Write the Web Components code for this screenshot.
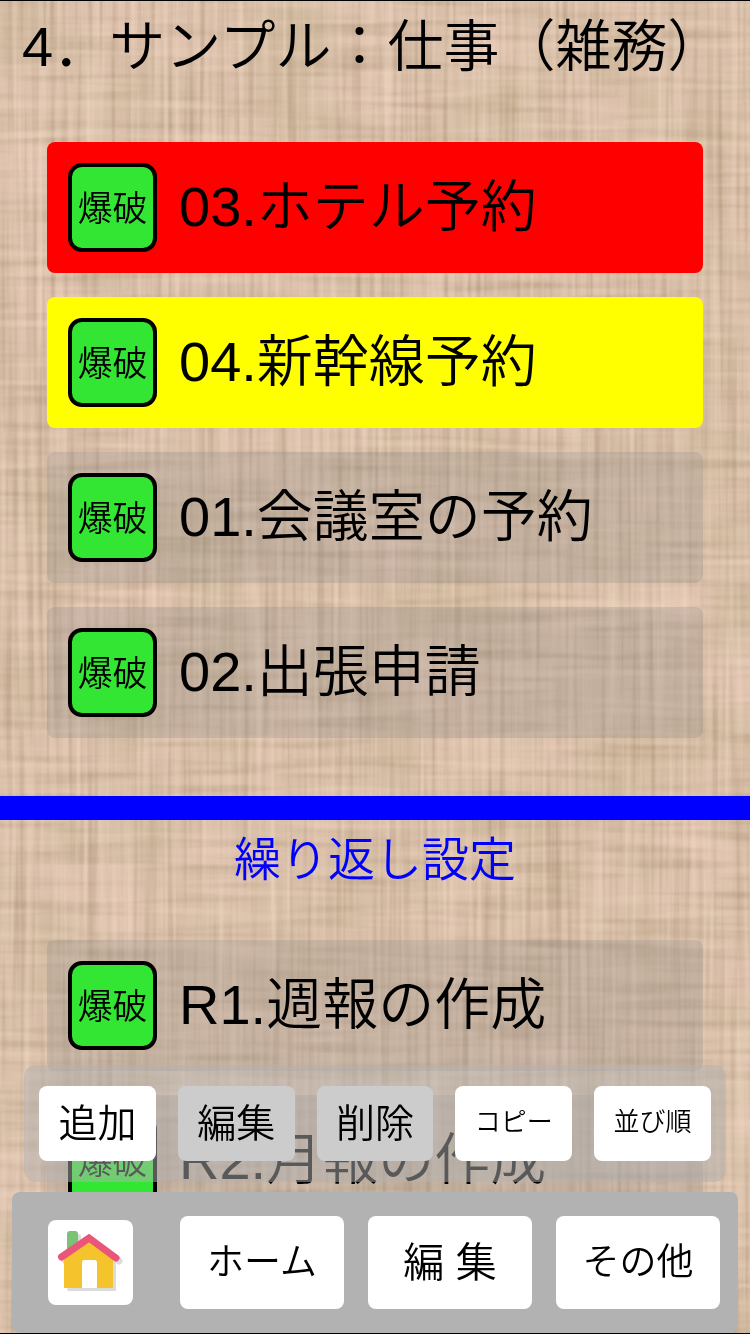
<!DOCTYPE html>
<html lang="ja">
<head>
    <meta charset="UTF-8">
    <meta name="viewport" content="width=device-width, initial-scale=1.0">
    <title>サンプル：仕事（雑務）</title>
    <style>
        body {
            margin: 0;
            color: #000;
            font-family: "Liberation Sans", "Noto Sans CJK JP", sans-serif;
            font-weight: 350;
        }
    </style>
</head>
<body>
    <template id="linen-backdrop">
        <style>
            :host {
                position: fixed;
                inset: 0;
                z-index: -1;
                background: #dac0aa;
            }
            svg {
                display: block;
                width: 100%;
                height: 100%;
            }
        </style>
        <svg aria-hidden="true">
            <filter id="weave" x="0" y="0" width="100%" height="100%" color-interpolation-filters="sRGB">
                <!-- large pink and olive patches -->
                <feTurbulence type="fractalNoise" baseFrequency="0.012 0.014" numOctaves="2" seed="4" result="n0"/>
                <feColorMatrix in="n0" values="0 0 0 0 .76  0 0 0 0 .69  0 0 0 0 .56  1.4 0 0 0 -.6" result="olive"/>
                <feColorMatrix in="n0" values="0 0 0 0 .92  0 0 0 0 .79  0 0 0 0 .73  0 1.4 0 0 -.6" result="pink"/>
                <!-- vertical threads -->
                <feTurbulence type="fractalNoise" baseFrequency="0.16 0.004" numOctaves="2" seed="9" result="n1"/>
                <feColorMatrix in="n1" values="0 0 0 0 .6  0 0 0 0 .49  0 0 0 0 .38  .9 0 0 0 -.4" result="vDark"/>
                <feColorMatrix in="n1" values="0 0 0 0 .97  0 0 0 0 .88  0 0 0 0 .8  0 1 0 0 -.42" result="vLight"/>
                <!-- horizontal threads -->
                <feTurbulence type="fractalNoise" baseFrequency="0.007 0.1" numOctaves="2" seed="21" result="n2"/>
                <feColorMatrix in="n2" values="0 0 0 0 .6  0 0 0 0 .5  0 0 0 0 .38  .8 0 0 0 -.38" result="hDark"/>
                <feColorMatrix in="n2" values="0 0 0 0 .97  0 0 0 0 .87  0 0 0 0 .78  0 .8 0 0 -.38" result="hLight"/>
                <feMerge>
                    <feMergeNode in="olive"/>
                    <feMergeNode in="pink"/>
                    <feMergeNode in="hDark"/>
                    <feMergeNode in="vDark"/>
                    <feMergeNode in="hLight"/>
                    <feMergeNode in="vLight"/>
                </feMerge>
            </filter>
            <rect width="100%" height="100%" filter="url(#weave)"/>
        </svg>
    </template>

    <template id="task-page">
        <style>
            :host {
                display: block;
                box-sizing: border-box;
                min-height: 100vh;
                border: solid #000;
                border-width: 1px 0;
            }
            h1 {
                margin: 0;
                padding: 4px 22px 53px;
                font-size: 56px;
                font-weight: inherit;
                line-height: 84px;
                white-space: nowrap;
            }
            footer {
                position: fixed;
                left: 0;
                right: 0;
                bottom: 1px;
                display: flex;
                flex-direction: column;
                gap: 10px;
            }
        </style>
        <h1><slot name="title"></slot></h1>
        <main><slot></slot></main>
        <footer><slot name="bars"></slot></footer>
    </template>

    <template id="task-list">
        <style>
            :host {
                display: flex;
                flex-direction: column;
                gap: 24px;
                padding: 0 47px;
            }
        </style>
        <slot></slot>
    </template>

    <template id="task-item">
        <style>
            :host {
                display: flex;
                align-items: center;
                gap: 22px;
                box-sizing: border-box;
                height: 131px;
                padding: 0 21px;
                border-radius: 8px;
                background: var(--item-bg, rgba(128, 128, 128, .24));
            }
            button {
                box-sizing: border-box;
                flex: none;
                width: 89px;
                height: 89px;
                padding: 0 0 4px;
                border: 4px solid #000;
                border-radius: 14px;
                background: #33e633;
                color: #000;
                font: inherit;
                font-size: 35px;
                white-space: nowrap;
            }
            span {
                padding-bottom: 2px;
                font-size: 56px;
                line-height: 84px;
                white-space: nowrap;
            }
        </style>
        <button type="button">爆破</button>
        <span><slot></slot></span>
    </template>

    <template id="section-divider">
        <style>
            :host {
                display: block;
                margin-top: 58px;
                padding-bottom: 40px;
                border-top: 24px solid #00f;
            }
            h2 {
                margin: 0;
                color: #00f;
                font-size: 47px;
                font-weight: inherit;
                line-height: 80px;
                text-align: center;
            }
        </style>
        <h2><slot></slot></h2>
    </template>

    <template id="edit-bar">
        <style>
            :host {
                display: grid;
                grid-template-columns: repeat(5, 1fr);
                gap: 22px;
                margin: 0 24px;
                padding: 21px 15px;
                border-radius: 12px;
                background: rgba(178, 178, 178, .5);
            }
        </style>
        <slot></slot>
    </template>

    <template id="nav-bar">
        <style>
            :host {
                display: grid;
                grid-template-columns: 108px repeat(3, 1fr);
                align-items: center;
                gap: 24px;
                margin: 0 12px;
                padding: 24px 18px 24px 36px;
                border-radius: 8px;
                background: #b2b2b2;
            }
        </style>
        <slot></slot>
    </template>

    <template id="bar-button">
        <style>
            :host {
                display: block;
                height: var(--button-height, 75px);
            }
            button {
                width: 100%;
                height: 100%;
                padding: 0 0 8px;
                border: 0;
                border-radius: 8px;
                background: #fff;
                color: #000;
                font: inherit;
                font-size: var(--button-size, 39px);
                white-space: nowrap;
            }
            button:disabled {
                background: #ccc;
            }
        </style>
        <button type="button"><slot></slot></button>
    </template>

    <template id="house-button">
        <style>
            :host {
                display: block;
            }
            button {
                display: block;
                width: 85px;
                height: 85px;
                padding: 0;
                border: 0;
                border-radius: 8px;
                background: #fff;
            }
            svg {
                display: block;
            }
        </style>
        <button type="button" aria-label="トップ">
            <svg width="85" height="85" viewBox="0 0 85 85" aria-hidden="true">
                <g fill="#dcdcdc" stroke="#dcdcdc" transform="translate(3 3)">
                    <path d="M16.500 68V38L41 19l24 19v30z" stroke="none"/>
                    <path d="M13.500 37 41 18l27 20" fill="none" stroke-width="7" stroke-linecap="round"/>
                    <rect x="19" y="11" width="11" height="19" rx="3" stroke="none"/>
                </g>
                <path d="M34 42q0-2 2-2h11q2 0 2 2v26H34z" fill="#fff"/>
                <rect x="19" y="11" width="11" height="23" rx="3" fill="#7bc275"/>
                <path d="M16 68V38L41 19l24 19v30H49V42q0-2-2-2H36q-2 0-2 2v26z" fill="#f5c32c"/>
                <path d="M13.500 37 41 18l27 20" fill="none" stroke="#ea5679" stroke-width="7" stroke-linecap="round" stroke-linejoin="miter"/>
            </svg>
        </button>
    </template>

    <linen-backdrop></linen-backdrop>

    <task-page>
        <span slot="title">4．サンプル：仕事（雑務）</span>

        <task-list>
            <task-item style="--item-bg: #f00">03.ホテル予約</task-item>
            <task-item style="--item-bg: #ff0">04.新幹線予約</task-item>
            <task-item>01.会議室の予約</task-item>
            <task-item>02.出張申請</task-item>
        </task-list>

        <section-divider>繰り返し設定</section-divider>

        <task-list>
            <task-item>R1.週報の作成</task-item>
            <task-item>R2.月報の作成</task-item>
        </task-list>

        <edit-bar slot="bars">
            <bar-button>追加</bar-button>
            <bar-button disabled>編集</bar-button>
            <bar-button disabled>削除</bar-button>
            <bar-button style="--button-size: 26px">コピー</bar-button>
            <bar-button style="--button-size: 26px">並び順</bar-button>
        </edit-bar>

        <nav-bar slot="bars" style="--button-height: 93px">
            <house-button></house-button>
            <bar-button style="--button-size: 37px">ホーム</bar-button>
            <bar-button style="--button-size: 41px">編 集</bar-button>
            <bar-button style="--button-size: 37px">その他</bar-button>
        </nav-bar>
    </task-page>

    <script>
        // every element is cloned from the template that has its tag name as id
        class TemplateElement extends HTMLElement {
            constructor() {
                super();
                const template = document.getElementById(this.localName);
                this.attachShadow({mode: 'open'});
                this.shadowRoot.appendChild(template.content.cloneNode(true));
            }
        }

        class LinenBackdrop extends TemplateElement {}
        class TaskPage extends TemplateElement {}
        class TaskList extends TemplateElement {}
        class SectionDivider extends TemplateElement {}
        class EditBar extends TemplateElement {}
        class NavBar extends TemplateElement {}
        class HouseButton extends TemplateElement {}

        class TaskItem extends TemplateElement {
            connectedCallback() {
                this.shadowRoot.querySelector('button').addEventListener('click', () => this.remove());
            }
        }

        class BarButton extends TemplateElement {
            connectedCallback() {
                this.shadowRoot.querySelector('button').disabled = this.hasAttribute('disabled');
            }
        }

        customElements.define('linen-backdrop', LinenBackdrop);
        customElements.define('task-page', TaskPage);
        customElements.define('task-list', TaskList);
        customElements.define('task-item', TaskItem);
        customElements.define('section-divider', SectionDivider);
        customElements.define('edit-bar', EditBar);
        customElements.define('nav-bar', NavBar);
        customElements.define('bar-button', BarButton);
        customElements.define('house-button', HouseButton);
    </script>
</body>
</html>
